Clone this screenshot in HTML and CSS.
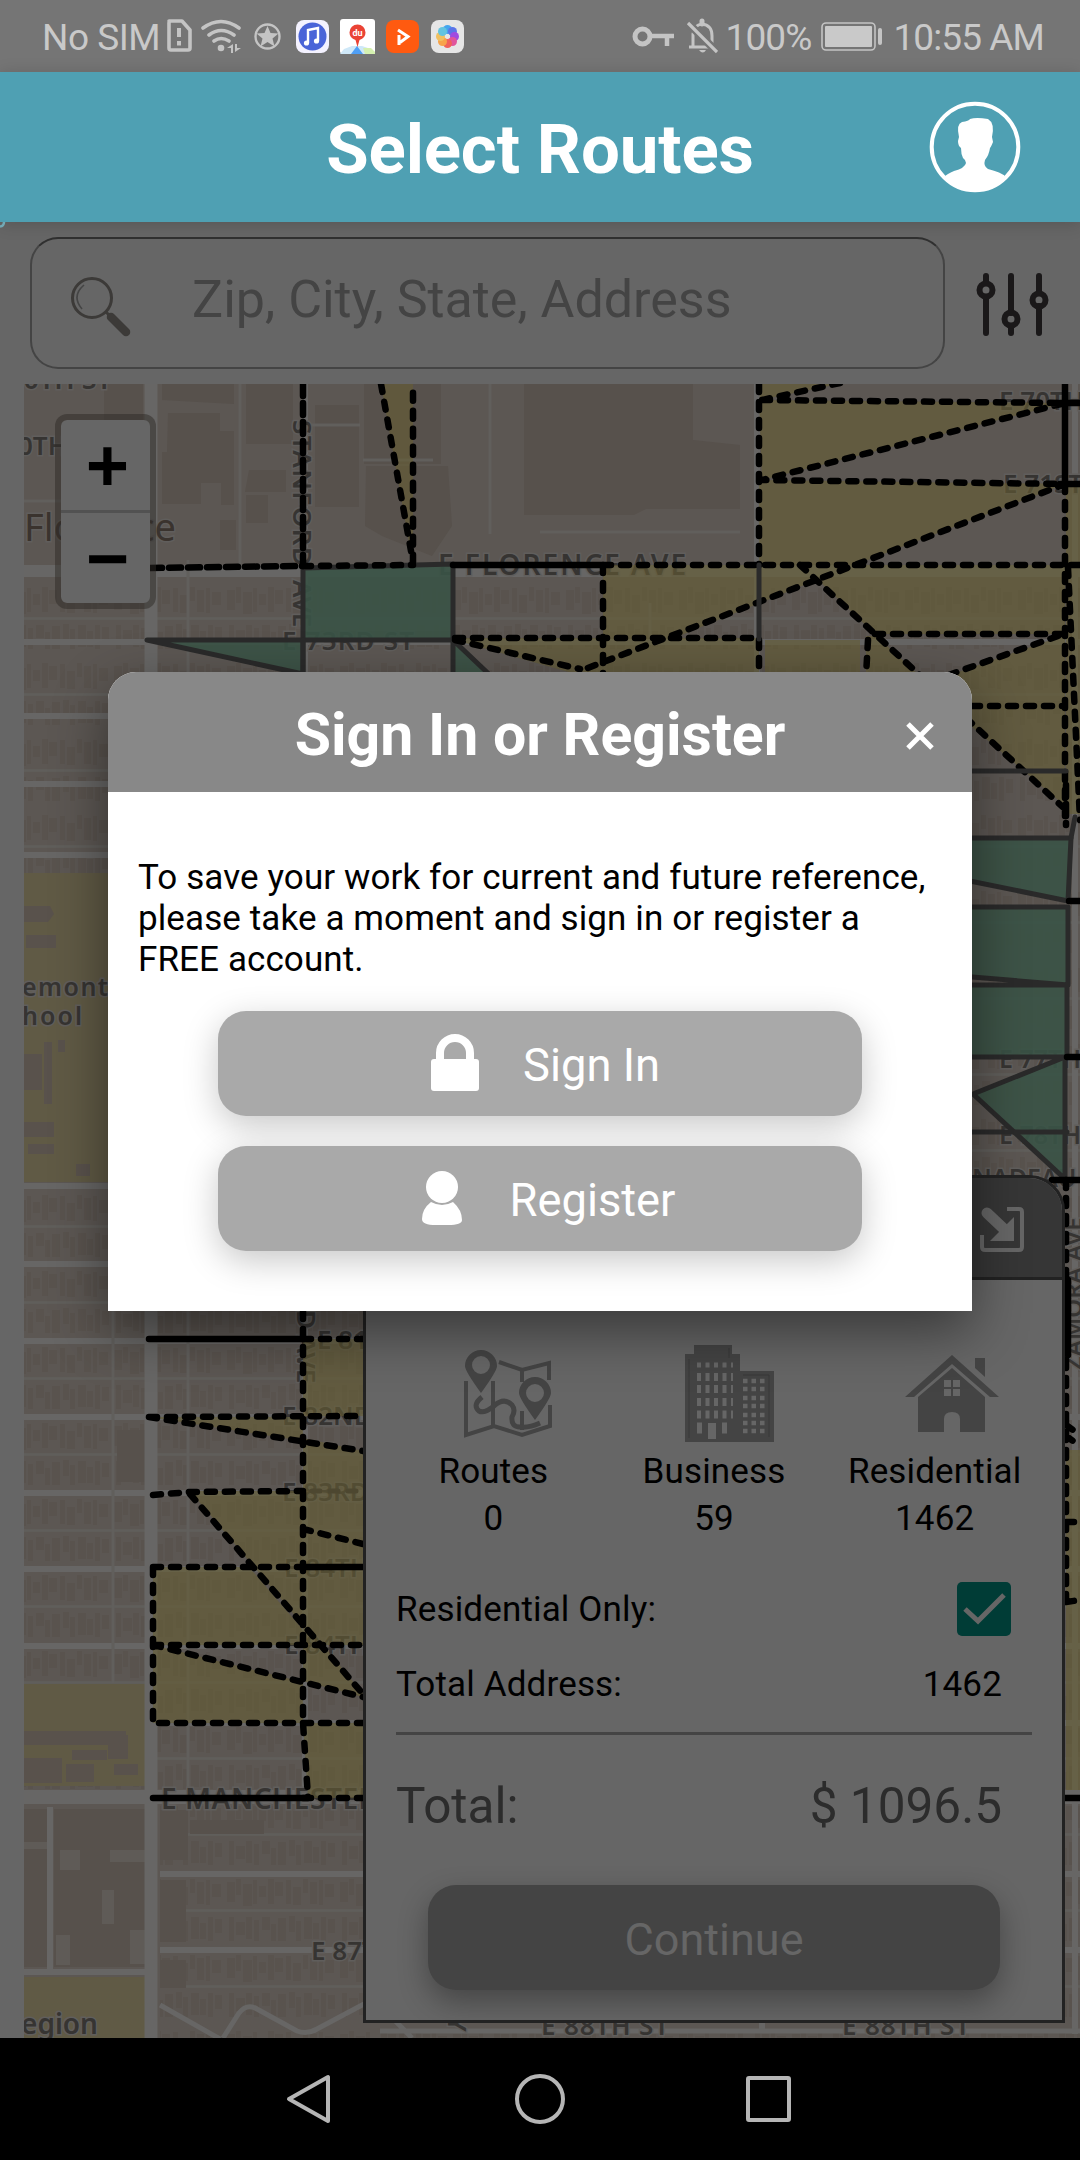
FILE: index.html
```html
<!DOCTYPE html>
<html lang="en">
<head>
<meta charset="utf-8">
<title>Select Routes</title>
<link rel="stylesheet" href="styles.css">
</head>
<body>
<div class="app">
  <div class="status">
    <span class="sim">No SIM</span>
    <svg class="status-left" width="310" height="40" viewBox="160 16 310 40">
      <g fill="none" stroke="#c4c4c4" stroke-width="3.6">
        <path d="M169 21h13l8 9v18q0 2-2 2h-17q-2 0-2-2V23q0-2 2-2z" stroke-linejoin="round"/>
        <path d="M179 28v9M179 41v4.500" stroke-width="4"/>
        <path d="M203 28q18-13 36 0M209 35q12-9 25 0M214 41q7-5 15 0" stroke-linecap="round"/>
        <circle cx="267.500" cy="36.500" r="12" stroke-width="2.400"/>
      </g>
      <g fill="#c4c4c4">
        <circle cx="221" cy="48" r="3.300"/>
        <path d="M227 48l6-4v9h-2v-5zM235 44v8l6-4h-4v-4z"/>
        <path d="M267.500 26l3 7 8 .5-6 5 2 8-7-4.500-7 4.500 2-8-6-5 8-.5z"/>
      </g>
      <rect x="296" y="20" width="33" height="33" rx="8" fill="#f4f2ff"/>
      <circle cx="312.500" cy="36.500" r="14" fill="#4a64d8"/>
      <path d="M308 43V30l10-2v13" fill="none" stroke="#fff" stroke-width="2.400"/>
      <circle cx="306.500" cy="43" r="2.600" fill="#fff"/><circle cx="316.500" cy="41" r="2.600" fill="#fff"/>
      <rect x="340" y="19" width="35" height="35" rx="3" fill="#fff"/>
      <path d="M340 54l4-5 8-3h10l9 3 4 5z" fill="#cfe8f8"/><path d="M351 54l6-8 6 8z" fill="#4f9ff5"/><path d="M365 54l-2-6 8 0 4 4v2z" fill="#d5f0b0"/>
      <path d="M357.500 47l-2-7q-6-2-6-7.500a8 8 0 0 1 16 0q0 5.500-6 7.500z" fill="#ea4335"/>
      <text x="357.500" y="36" class="du">du</text>
      <rect x="386" y="20" width="33" height="33" rx="8" fill="#ff5a10"/>
      <path d="M399 45V35M398 30l10 6.500-8 6" fill="none" stroke="#fff" stroke-width="3"/>
      <rect x="431" y="20" width="33" height="33" rx="8" fill="#e6e6e6"/>
      <g transform="translate(447.500 36.500)">
        <circle cy="-7" r="4.500" fill="#45a5ee"/><circle cx="5" cy="-5" r="4.500" fill="#5b74e8"/><circle cx="7" r="4.500" fill="#a04be0"/><circle cx="5" cy="5" r="4.500" fill="#e0559c"/><circle cy="7" r="4.500" fill="#f0605a"/><circle cx="-5" cy="5" r="4.500" fill="#f7a24a"/><circle cx="-7" r="4.500" fill="#f0c060"/><circle cx="-5" cy="-5" r="4.500" fill="#62c4e0"/>
      </g>
    </svg>
    <span class="spacer"></span>
    <svg class="key" width="86" height="40" viewBox="632 16 86 40">
      <g fill="none" stroke="#c4c4c4">
        <circle cx="642.500" cy="36.500" r="7.500" stroke-width="5"/>
        <path d="M651 36h23M667 36v10" stroke-width="4.500"/>
        <path d="M689 47h26M693 46q0-5 0-12 1-9 9-10 10 1 10 12v9" stroke-width="3"/>
        <path d="M702 24v-3" stroke-width="5" stroke-linecap="round"/>
      </g>
      <path d="M688 23l29 29" stroke="#757575" stroke-width="8"/><path d="M688 23l29 29" stroke="#c4c4c4" stroke-width="3.200"/><path d="M699 50h7q-3 5-7 0z" fill="#c4c4c4"/>
    </svg>
    <span class="pct">100%</span>
    <svg class="battery" width="62" height="32" viewBox="0 0 62 32">
      <rect x="1" y="2" width="53" height="27" rx="4" fill="none" stroke="#c4c4c4" stroke-width="1.600"/><rect x="4" y="5" width="47" height="21" rx="1" fill="#c9c9c9"/><rect x="57" y="7" width="4" height="17" rx="2" fill="#c4c4c4"/>
    </svg>
    <span class="clock">10:55 AM</span>
  </div>

  <header class="topbar">
    <h1>Select Routes</h1>
    <svg class="profile" width="92" height="92" viewBox="0 0 92 92">
      <circle cx="46" cy="46" r="43.300" fill="none" stroke="#fff" stroke-width="4"/>
      <path d="M15 76Q18 73 25 70Q36 67 37 62Q37 59 34 57Q32 53 32 47Q29 45 29 40L30 36Q27 23 33 21Q40 20 41 18Q47 16 59 18Q66 22 63 36L64 41Q62 46 61 47Q60 54 56 59Q54 65 59 68Q72 71 77 76Q64 90 46 90Q27 90 15 76Z" fill="#fff"/>
    </svg>
    <svg class="spinner" width="8" height="8" viewBox="0 0 8 8"><path d="M4 0q0 4-4 4.500" fill="none" stroke="#72a9b5" stroke-width="2.500"/></svg>
  </header>

  <main class="content">
    <div class="search-row">
      <div class="search">
        <svg width="62" height="62" viewBox="0 0 62 62">
          <circle cx="22" cy="22" r="19.500" fill="none" stroke="#3c3a38" stroke-width="3"/>
          <path d="M12 33Q1 20 14 9" fill="none" stroke="#444" stroke-width="1.600"/>
          <path d="M36 36l4 4" stroke="#3c3a38" stroke-width="3"/><path d="M41 41l15 15" stroke="#3c3a38" stroke-width="8.500" stroke-linecap="round"/>
        </svg>
        <span>Zip, City, State, Address</span>
      </div>
      <svg class="filters" width="74" height="66" viewBox="0 0 74 66">
        <g fill="none" stroke="#1a1819" stroke-width="6" stroke-linecap="round"><path d="M10 4v6M10 25v36M35 4v37M35 55v6M63 4v16M63 34v27"/><circle cx="10" cy="18" r="6.500"/><circle cx="35" cy="47" r="6.500"/><circle cx="63" cy="28" r="6.500"/></g>
      </svg>
    </div>

    <section class="map">
      <svg class="tiles" width="1056" height="1654" viewBox="24 384 1056 1654">
        <defs>
          <pattern id="lots" width="113" height="76" patternUnits="userSpaceOnUse" patternTransform="translate(0 48)">
            <path d="M1 10h8v20h-8zM10 7h5v16h-5zM17 12h9v22h-9zM27 8h4v24h-4zM33 14h7v11h-7zM42 7h6v25h-6zM49 10h8v14h-8zM60 8h5v24h-5zM67 15h8v18h-8zM77 7h5v14h-5zM84 10h7v22h-7zM93 8h4v25h-4zM99 12h9v13h-9zM3 45h5v24h-5zM10 50h9v13h-9zM20 45h6v22h-6zM28 48h5v21h-5zM36 45h8v13h-8zM45 52h5v17h-5zM52 46h8v23h-8zM63 44h6v16h-6zM70 49h5v20h-5zM78 45h8v22h-8zM87 51h6v16h-6zM95 45h5v24h-5zM102 47h7v14h-7z" fill="#59534e"/>
            <path d="M0 38.500h113" stroke="#605e5b" stroke-width="2.500"/>
          </pattern>
        </defs>
        <rect x="24" y="384" width="1056" height="1654" fill="#5c5753"/>
        <path d="M24 580h1056v1224H24zM160 1806h920v232H160z" fill="url(#lots)"/>
        <g fill="#57514c">
          <path d="M162 384h72v20l-72-4zM168 413h52v18h14v74h-13v-22h-20v21h-39v-52h5zM246 384h47v60h-47zM249 470h37v22h-41zM315 405h44v102h-44zM364 384h77v80h-77zM366 466h82l4 60-20 30-50-20-17-10zM524 384h169v56l47 5v64h-94l-12 6H524zM220 520h16v30h-16zM246 495h22v28h-22zM104 384h39v41h-39z"/>
          <path d="M54 1809h93v158h-93zM24 1809h23v158h-23zM190 1820h74v14h-74z"/>
          <path d="M117 1430h28v52h-28zM160 1810h28v50h-28zM160 1880h26v62h-26zM160 1960h26v28h-26z"/>
        </g>
        <g fill="#5f5b57"><path d="M60 1850h20v20h-20zM110 1850h36v12h-36zM102 1890h12v34h-12zM56 1935h14v30h-14zM130 1930h16v34h-16zM24 1842h23v7H24z"/></g>
        <g fill="#605a45"><path d="M24 873h88v309H24zM24 1684h121v102H24zM24 1977h121v61H24z"/></g>
        <g fill="#59524c"><path d="M24 906h26l4 8-6 8H24zM26 935h30v13H26zM44 1042h8v62h-8zM58 1040h7v12h-7zM24 1054h18v36H24zM24 1122h30v15H24zM28 1144h26v10H28zM76 1164h14v12h-14zM24 1731h102v14H24zM72 1750h35v10H72zM24 1758h38v25H24zM66 1764h28v18H66zM108 1735h20v24h-20zM114 1764h24v11h-24z"/></g>
        <g stroke="#676665" fill="none">
          <path d="M151 384v1654" stroke-width="13"/>
          <path d="M24 571h1056" stroke-width="12"/>
          <path d="M24 1797h1056" stroke-width="14"/>
          <path d="M24 642h1056M24 716h140M24 784h140M24 855h140M24 1186h140M24 1264h140M24 1341h1056M24 1417h1056M24 1493h1056M24 1569h1056M24 1646h1056M151 1723h929M160 1874h920M160 1950h920M24 1972h127M50 1807v162M757 384v1420M305 384v1414M1075 384v1650M762 2030V1950" stroke-width="6"/>
          <path d="M223 2038l16-25q8-10 18-4l40 22q10 4 20-2l47-25M160 2005l60 34M370 1995l42 43M380 2031h700" stroke-width="5"/>
        </g>
        <path d="M113 1311v372M188 560v1240M24 501h120M240 384v185M363 460h70M310 425h50M490 384v150M540 532h200M650 603v35" stroke="#615f5c" fill="none" stroke-width="3"/>

        <g class="halo-labels">
          <text x="8" y="389" font-size="27">70TH ST</text><text x="18" y="455" font-size="26">0TH</text>
          <text x="24" y="541" font-size="38" class="place">Florence</text>
          <text transform="translate(293 420) rotate(90)" font-size="26" textLength="146">STANFORD</text>
          <text transform="translate(293 580) rotate(90)" font-size="26">AVE</text>
          <text x="438" y="575" font-size="28" textLength="248">E FLORENCE AVE</text>
          <text x="282" y="650" font-size="26" textLength="132">E 73RD ST</text>
          <text x="999" y="410" font-size="26">E 70TH ST</text><text x="1003" y="493" font-size="26">E 71ST ST</text>
          <text x="22" y="996" font-size="25" textLength="86">emont</text><text x="22" y="1025" font-size="25" textLength="60">hool</text>
          <text x="999" y="1068" font-size="25">E 77TH ST</text><text x="999" y="1144" font-size="25">E 78TH ST</text><text x="972" y="1187" font-size="25">NADEAU ST</text>
          <text transform="translate(297 1310) rotate(90)" font-size="26">D AVE</text>
          <text x="317" y="1349" font-size="26">E 81ST</text><text x="282" y="1425" font-size="26">E 82ND</text><text x="282" y="1501" font-size="26">E 83RD</text><text x="284" y="1577" font-size="26">E 84TH</text><text x="284" y="1654" font-size="26">E 84TH</text>
          <text x="161" y="1809" font-size="28" textLength="276">E MANCHESTER AVE</text>
          <text x="311" y="1960" font-size="26">E 87TH</text><text x="21" y="2034" font-size="28">egion</text>
          <text x="541" y="2035" font-size="26" textLength="128">E 88TH ST</text><text x="842" y="2035" font-size="26" textLength="128">E 88TH ST</text>
          <text transform="translate(448 2016) rotate(90)" font-size="26">Y</text>
          <text transform="translate(1082 1370) rotate(-90)" font-size="24">ZAMORA AVE</text>
        </g>

        <g class="yellow">
          <path d="M381 384h32v181zM759 384h80l-79 16zM759 400l306 3-303 77zM759 480l306 4-210 81h-96zM603 565h250l-250 102zM455 638h304v40H590l-135-38zM845 565h220v69H875l-59-56zM866 636h10l44 40h-54zM765 640h95v36h-95zM950 675l115-40v171l-120-102zM1066 484h14v330h-14zM303 1339h60v77h-60zM149 1417h154v24zM303 1438l60 13v116h-60zM190 1491h113v134zM153 1567h96l54 63v15H153zM303 1567h60v78h-60zM153 1645l150 37v41H153zM303 1645h20l40 49v3l-60-16zM303 1723h60v75h-55zM1066 1450h14v340h-14z"/>
        </g>
        <g class="green"><path d="M303 568l150-4v76H303zM147 640h156v34zM453 640l40 38h-40zM960 838h111l-3 63-108-22zM960 907h108v78l-108-9zM960 985h107v72H960zM973 1094l92-37v122z"/></g>
        <g class="dash">
          <path d="M381 384l32 178V384M303 566l110-1M759 384v181M762 400l78-17M762 400l303 3-303 77 303 4-210 81-275 106M603 565h477M603 565v110M455 638h304M455 640l125 29M800 565l75 69 50 46M875 634h190M1058 636l-115 41M868 640l-2 36M759 640v40M1065 484v336M1068 568l12 252M972 706h93M966 718l100 92M1066 1180v430M303 1311v412l5 74M303 1339h60M149 1417l214-1M149 1417l214 34M153 1495l37-3 113-1M190 1494l173 200M303 1529l60 15M153 1567h150M153 1567v156h210M153 1645h210M153 1645l210 52M303 1798h60M1066 1425l14 10M1066 1436l14 10M1066 1522h14M1066 1602l14-2"/>
          <path d="M453 565h150M1065 384v100M1060 403h20M1060 484h20M149 1339h154M303 1567h60M153 1798h155M1052 1180h28M1069 901h11M1067 1057h13M1060 1798h20M1068 1280v75" class="solid"/>
          <path d="M303 384v181M150 568l153-2M1066 785v40" class="tight"/>
        </g>
        <path d="M312 1491h48" class="faint"/>
        <g fill="none" stroke="#2a2a2a" stroke-width="5" stroke-linecap="round" stroke-linejoin="round"><path d="M759 565v74M960 771h106M1075 817l-4 21M960 1132h107M303 640v40"/></g>
      </svg>

      <div class="zoom"><span>+</span><span>&minus;</span></div>

      <aside class="panel">
        <div class="panel-head">
          <svg width="46" height="46" viewBox="0 0 46 46"><path d="M28 3h12q3 0 3 3v35q0 3-3 3H6q-3 0-3-3V29" fill="none" stroke="#666" stroke-width="4"/><path d="M8 7l18 17" stroke="#666" stroke-width="11" stroke-linecap="round"/><path d="M35 11v24H11z" fill="#666"/></svg>
        </div>
        <div class="panel-body">
          <div class="stats">
            <div class="stat">
              <svg width="92" height="98" viewBox="0 0 92 98"><g fill="none" stroke="#444" stroke-width="4"><path d="M37 17l23 8 27-7v17M4 36v54l28-9 28 9 28-9V60M31 36v46M60 25v12M60 66v19" /><path d="M20 52q-10 8-3 14 5 3 15-5 10-9 18-1 4 5 0 12-1 10 8 10 9 1 20-4" stroke-width="5"/></g><path fill="#444" fill-rule="evenodd" d="M19 48Q3 26 3 21A16 16 0 0 1 35 21Q35 26 19 48ZM28 20A9 9 0 1 0 10 20A9 9 0 1 0 28 20ZM73 75Q57 53 57 48A16 16 0 0 1 89 48Q89 53 73 75ZM82 48A9 9 0 1 0 64 48A9 9 0 1 0 82 48Z"/></svg>
              <span>Routes</span><span>0</span>
            </div>
            <div class="stat">
              <svg width="92" height="98" viewBox="0 0 92 98"><path fill="#444" d="M2 9h9V0h38v9h8v17h34v71H2z"/><path d="M6 14v79M46 3v10M60 30h26v62" stroke="#383838" fill="none"/><path d="M14 20h36" stroke="#666" stroke-width="5" stroke-dasharray="4 4.500"/><path d="M14 32h36M14 44h36M14 57h36M14 69.500h36" stroke="#666" stroke-width="8" stroke-dasharray="4 4.500"/><path d="M14 83h5M39 83h5" stroke="#666" stroke-width="11"/><path d="M25 78h8v16h-8z" fill="#666"/><path d="M60 36h24M60 44h24M60 53h24M60 61h24M60 70h24M60 78h24M60 86h24" stroke="#666" stroke-width="4.500" stroke-dasharray="4.500 4"/></svg>
              <span>Business</span><span>59</span>
            </div>
            <div class="stat">
              <svg width="96" height="98" viewBox="0 0 96 98"><path d="M1 52L48 10l47 42h-9L48 19 10 52z" fill="#444"/><path d="M71 13h10v19l-10-9z" fill="#444"/><path d="M14 52l34-29 33 29v35H56V74q0-7-8-7t-8 7v13H14z" fill="#444"/><path d="M40 35h7v7h-7zM49 35h7v7h-7zM40 44h7v7h-7zM49 44h7v7h-7z" fill="#666"/></svg>
              <span>Residential</span><span>1462</span>
            </div>
          </div>
          <div class="line only"><span>Residential Only:</span><svg width="54" height="54" viewBox="0 0 54 54"><rect width="54" height="54" rx="5" fill="#003c36"/><path d="M8 27l13 12 26-26" fill="none" stroke="#666" stroke-width="5"/></svg></div>
          <div class="line addr"><span>Total Address:</span><span>1462</span></div>
          <div class="rule"></div>
          <div class="line total"><span>Total:</span><span>$ 1096.5</span></div>
          <div class="continue">Continue</div>
        </div>
      </aside>
    </section>
  </main>

  <nav class="navbar">
    <svg class="back" width="46" height="52" viewBox="0 0 46 52"><path d="M43 4v44L4 26z" fill="none" stroke="#b5b5b5" stroke-width="4" stroke-linejoin="round"/></svg>
    <svg width="52" height="52" viewBox="0 0 52 52"><circle cx="26" cy="26" r="23" fill="none" stroke="#b5b5b5" stroke-width="4"/></svg>
    <svg width="46" height="52" viewBox="0 0 46 52"><rect x="2" y="5" width="41" height="42" rx="1" fill="none" stroke="#b5b5b5" stroke-width="4"/></svg>
  </nav>

  <div class="modal">
    <div class="modal-head"><h2>Sign In or Register</h2>
      <svg class="close" width="30" height="30" viewBox="0 0 30 30"><path d="M3 3l24 24M27 3L3 27" stroke="#fff" stroke-width="5"/></svg>
    </div>
    <div class="modal-body">
      <p>To save your work for current and future reference, please take a moment and sign in or register a FREE account.</p>
      <div class="btn"><svg width="48" height="58" viewBox="0 0 48 58"><path d="M9 27V20a15 15 0 0 1 30 0v7" fill="none" stroke="#fff" stroke-width="8"/><rect y="26" width="48" height="32" rx="3" fill="#fff"/></svg><span>Sign In</span></div>
      <div class="btn register"><svg width="40" height="54" viewBox="0 0 40 54"><ellipse cx="20" cy="16" rx="16" ry="16" fill="#fff"/><path d="M9 31q11 6 22 0 9 8 9 18 0 5-14 5H14Q0 54 0 48 0 38 9 31z" fill="#fff"/></svg><span>Register</span></div>
    </div>
  </div>
</div>
</body>
</html>
```
FILE: styles.css
```css
* { box-sizing: border-box; }
body { margin: 0; background: #000; font-family: Roboto, "Liberation Sans", sans-serif; }
h1, h2, p { margin: 0; }
svg { display: block; flex: none; }
.app { position: relative; width: 1080px; height: 2160px; display: flex; flex-direction: column; overflow: hidden; }

.status { height: 72px; background: #757575; color: #c9c9c9; display: flex; align-items: center; padding: 2px 36px 0 42px; font-size: 37px; letter-spacing: -.9px; white-space: nowrap; }
.sim { letter-spacing: -.5px; }
.status-left { margin: -2px 0 0 0; }
.spacer { flex: 1; }
.key { margin-top: -2px; }
.pct { margin-left: 8px; }
.battery { margin: 0 10px 0 10px; }
.du { font: 700 9px Roboto, sans-serif; letter-spacing: 0; fill: #fff; text-anchor: middle; }

.topbar { position: relative; z-index: 1; height: 150px; background: #4fa0b3; display: flex; align-items: center; justify-content: center; box-shadow: 0 2px 16px rgba(0, 0, 0, .16); }
.topbar h1 { color: #fff; font-size: 69px; line-height: 80px; font-weight: 700; letter-spacing: -.15px; padding-top: 6px; }
.profile { position: absolute; right: 59px; top: 29px; }
.spinner { position: absolute; left: 0; top: 150px; }

.content { height: 1816px; background: #666; display: flex; flex-direction: column; }
.search-row { height: 162px; padding: 15px 30px 15px 30px; display: flex; align-items: flex-start; gap: 31px; }
.search { width: 915px; height: 132px; border: 2px solid #444; border-top-color: #303030; border-radius: 28px; display: flex; align-items: center; padding: 0 0 0 38px; gap: 60px; color: #444; font-size: 52px; }
.search svg { margin-top: 7px; }
.search span { padding-bottom: 8px; }
.filters { margin-top: 35px; }

.map { position: relative; height: 1654px; margin-left: 24px; overflow: hidden; }
.halo-labels { font-family: "Noto Sans", sans-serif; font-weight: 600; fill: #363432; stroke: #605e5c; stroke-width: 3px; paint-order: stroke; }
.place { font-weight: 400; fill: #3a332e; }
.yellow { fill: #665e33; fill-opacity: .6; }
.green { fill: #3a5346; fill-opacity: .9; stroke: #2a2a2a; stroke-width: 5px; stroke-linejoin: round; }
.dash { fill: none; stroke: #000; stroke-width: 6.5px; stroke-linecap: round; stroke-linejoin: round; stroke-dasharray: 8 10; }
.solid { stroke-dasharray: none; }
.tight { stroke-dasharray: 12 7; }
.faint { fill: none; stroke: #4d4730; stroke-width: 5px; stroke-linecap: round; stroke-dasharray: 8 10; }

.zoom { position: absolute; left: 31px; top: 30px; width: 101px; height: 195px; border: 6px solid rgba(45, 42, 38, .5); border-radius: 12px; background: #666; background-clip: padding-box; display: flex; flex-direction: column; }
.zoom span { flex: 1; display: flex; align-items: center; justify-content: center; font: 700 74px/60px "Liberation Mono", monospace; color: #000; padding: 12px 0 0 4px; }
.zoom span:first-child { border-bottom: 3px solid #525252; }

.panel { position: absolute; left: 339px; top: 791px; width: 702px; height: 848px; border: 3px solid #222; border-radius: 36px 36px 0 0; background: #666; overflow: hidden; display: flex; flex-direction: column; }
.panel-head { height: 102px; border-bottom: 3px solid #222; background: #363636; display: flex; justify-content: flex-end; align-items: center; padding: 2px 37px 0 0; }
.panel-body { flex: 1; color: #000; font-size: 35px; letter-spacing: .15px; display: flex; flex-direction: column; }
.stats { display: flex; justify-content: space-between; padding: 65px 17px 0; }
.stat { width: 222px; display: flex; flex-direction: column; align-items: center; line-height: 47px; }
.stat svg { margin: 0 0 5px 30px; }
.stat:last-child svg { margin-left: 34px; }
.line { display: flex; justify-content: space-between; align-items: center; padding: 0 60px 0 30px; flex: none; }
.only { height: 60px; margin-top: 37px; padding-right: 51px; }
.addr { height: 60px; margin-top: 15px; }
.rule { flex: none; height: 3px; margin: 18px 30px 0; background: #444; }
.total { height: 70px; margin-top: 36px; color: #2c2c2c; font-size: 49.5px; letter-spacing: 0; }
.continue { flex: none; width: 572px; height: 105px; margin: 44px 0 0 62px; border-radius: 28px; background: #444; color: #666; display: flex; align-items: center; justify-content: center; font-size: 45px; letter-spacing: 0; padding-top: 4px; box-shadow: 0 12px 30px rgba(0, 0, 0, .32); }

.navbar { height: 122px; background: #000; display: flex; justify-content: center; align-items: center; gap: 180px; }
.back { transform: translateX(-3px); }

.modal { position: absolute; left: 108px; top: 672px; width: 864px; height: 639px; background: #fff; border-radius: 28px 28px 0 0; box-shadow: 0 20px 55px rgba(0, 0, 0, .45); z-index: 2; }
.modal-head { position: relative; height: 120px; background: #888; border-radius: 28px 28px 0 0; display: flex; align-items: center; justify-content: center; }
.modal-head h2 { color: #fff; font-size: 59px; line-height: 70px; padding-top: 6px; }
.close { position: absolute; right: 37px; top: 49px; }
.modal-body { padding: 65px 30px 0; display: flex; flex-direction: column; align-items: center; }
.modal-body p { align-self: stretch; font-size: 35px; line-height: 41px; letter-spacing: .1px; color: #000; margin-bottom: 31px; }
.btn { width: 644px; height: 105px; margin-bottom: 30px; padding-left: 11px; border-radius: 28px; background: #a9a9a9; color: #fff; font-size: 45.3px; display: flex; align-items: center; justify-content: center; gap: 44px; box-shadow: 0 10px 35px rgba(0, 0, 0, .22); }
.btn svg { margin-top: -4px; }
.btn span { padding-top: 3px; }
.register { gap: 48px; padding-left: 17px; }
.register svg { margin-top: -2px; }
```
